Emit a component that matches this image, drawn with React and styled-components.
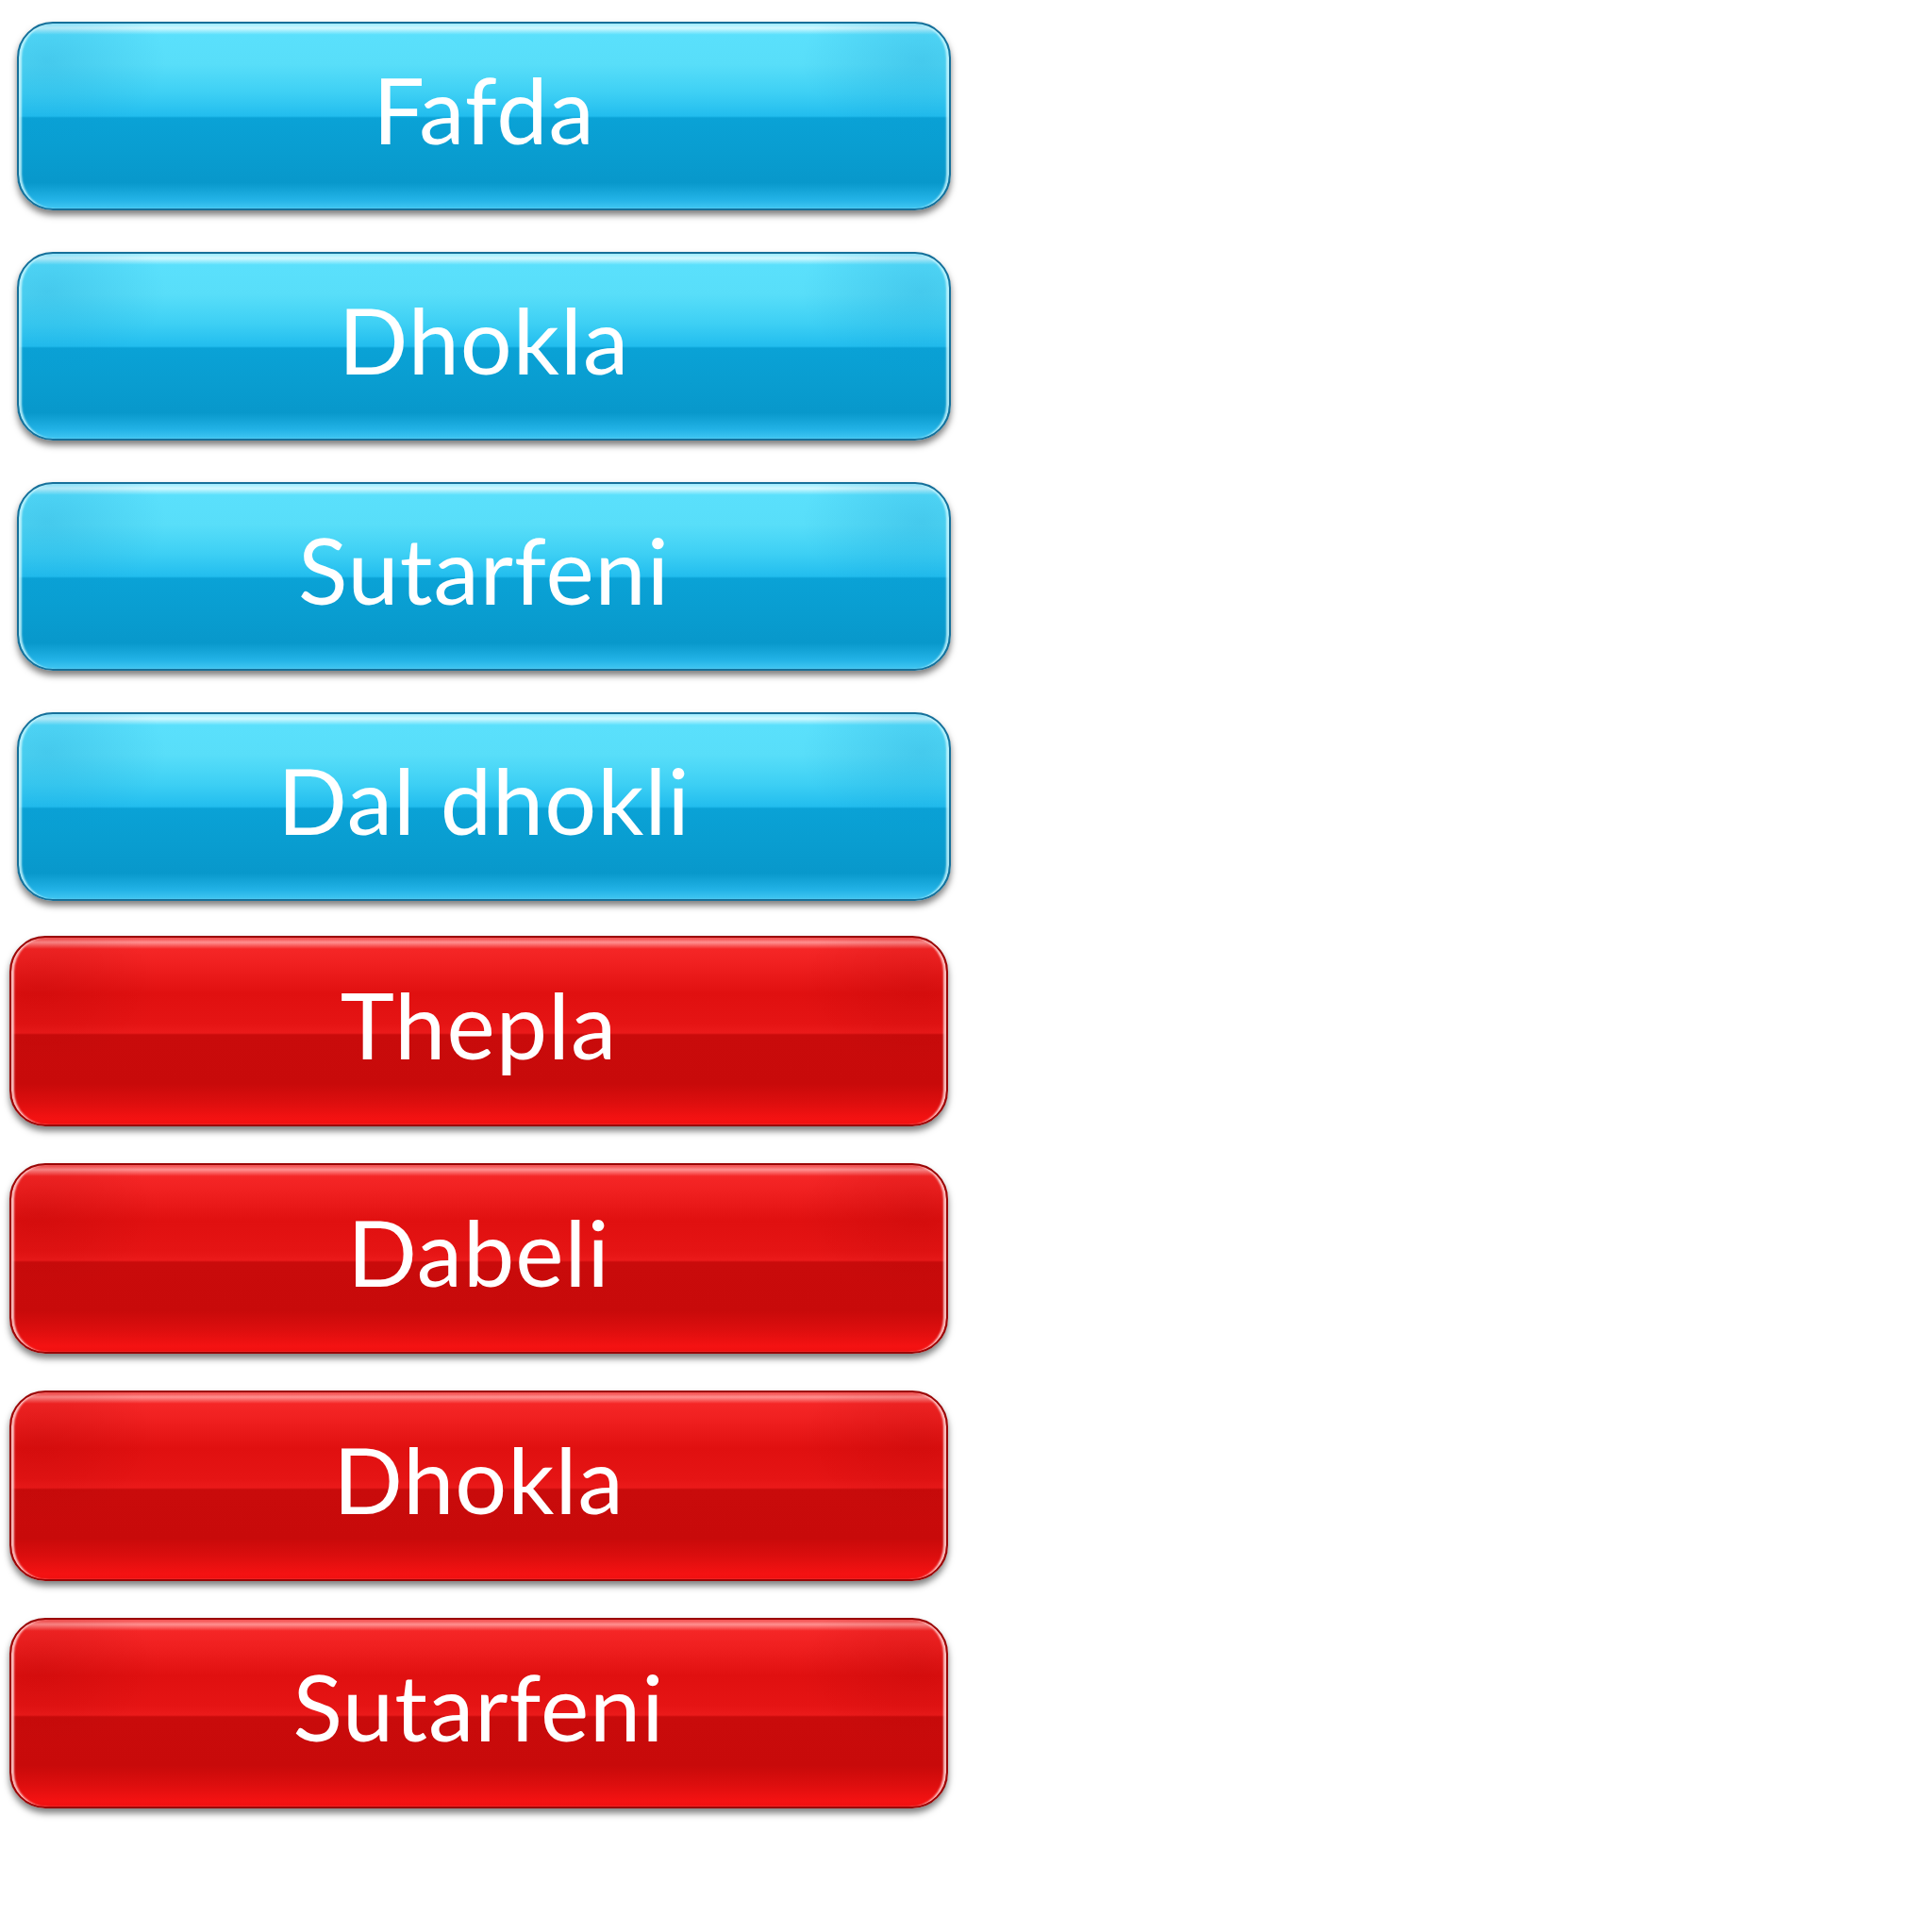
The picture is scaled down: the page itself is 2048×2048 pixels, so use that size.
import React from 'react';
import styled, { createGlobalStyle, css } from 'styled-components';

const GlobalStyle = createGlobalStyle`
    html, body {
        margin: 0;
        padding: 0;
        background: #ffffff;
    }
`;

const Page = styled.div`
    width: 2048px;
    min-height: 2048px;
    padding-top: 23px;
    box-sizing: border-box;
    background: #ffffff;
    font-family: Lato, "Open Sans", sans-serif;
`;

const Group = styled.div`
    display: flex;
    flex-direction: column;
    gap: ${p => p.$gap}px;
    margin-top: ${p => p.$top || 0}px;
    margin-left: ${p => p.$left}px;
`;

const blue = css`
    height: 200px;
    width: 990px;
    border: 2px solid #16709a;
    background:
        radial-gradient(ellipse 180px 120px at 30px 40px, rgba(10, 140, 200, 0.25), transparent 70%),
        radial-gradient(ellipse 180px 120px at calc(100% - 30px) 40px, rgba(10, 140, 200, 0.25), transparent 70%),
        linear-gradient(to bottom,
            #9eeeff 0%,
            #cff8ff 2.5%,
            #5ae0fc 6%,
            #58def9 22%,
            #3dcff4 38%,
            #22bdee 50%,
            #0aa2d6 51%,
            #099dd0 70%,
            #0898cb 86%,
            #22b2e6 95%,
            #40c6f2 100%);
    box-shadow:
        0 5px 7px rgba(0, 0, 0, 0.5),
        inset 4px 0 2px -1px rgba(210, 250, 255, 0.8),
        inset -4px 0 2px -1px rgba(210, 250, 255, 0.8);
`;

const red = css`
    height: 202px;
    width: 995px;
    border: 2px solid #9a0606;
    background:
        radial-gradient(ellipse 180px 120px at 30px 50px, rgba(160, 0, 0, 0.2), transparent 70%),
        radial-gradient(ellipse 180px 120px at calc(100% - 30px) 50px, rgba(160, 0, 0, 0.2), transparent 70%),
        linear-gradient(to bottom,
            #f24444 0%,
            #ff9090 2.5%,
            #f52626 6%,
            #f02020 14%,
            #e01010 30%,
            #e51414 46%,
            #eb1a1a 51%,
            #c90b0b 52%,
            #c80a0a 78%,
            #dc0e0e 88%,
            #f41212 97%,
            #f01010 100%);
    box-shadow:
        0 5px 7px rgba(0, 0, 0, 0.5),
        inset 4px 0 2px -1px rgba(255, 220, 220, 0.85),
        inset -4px 0 2px -1px rgba(255, 220, 220, 0.85);
`;

const GlossButton = styled.button`
    display: flex;
    align-items: center;
    justify-content: center;
    box-sizing: border-box;
    border-radius: 38px;
    padding: 0 0 15px 0;
    margin: 0;
    color: #ffffff;
    font-family: Lato, "Open Sans", sans-serif;
    font-size: 97px;
    font-weight: 400;
    line-height: 1;
    letter-spacing: 1px;
    cursor: pointer;
    ${p => (p.$variant === 'red' ? red : blue)}
`;

const blueItems = ['Fafda', 'Dhokla', 'Sutarfeni', 'Dal dhokli'];
const redItems = ['Thepla', 'Dabeli', 'Dhokla', 'Sutarfeni'];

export default function App() {
    return (
        <>
            <GlobalStyle />
            <Page>
                <Group $gap={44} $left={18}>
                    {blueItems.map((name, i) => (
                        <GlossButton key={i} $variant="blue">{name}</GlossButton>
                    ))}
                </Group>
                <Group $gap={39} $top={37} $left={10}>
                    {redItems.map((name, i) => (
                        <GlossButton key={i} $variant="red">{name}</GlossButton>
                    ))}
                </Group>
            </Page>
        </>
    );
}
